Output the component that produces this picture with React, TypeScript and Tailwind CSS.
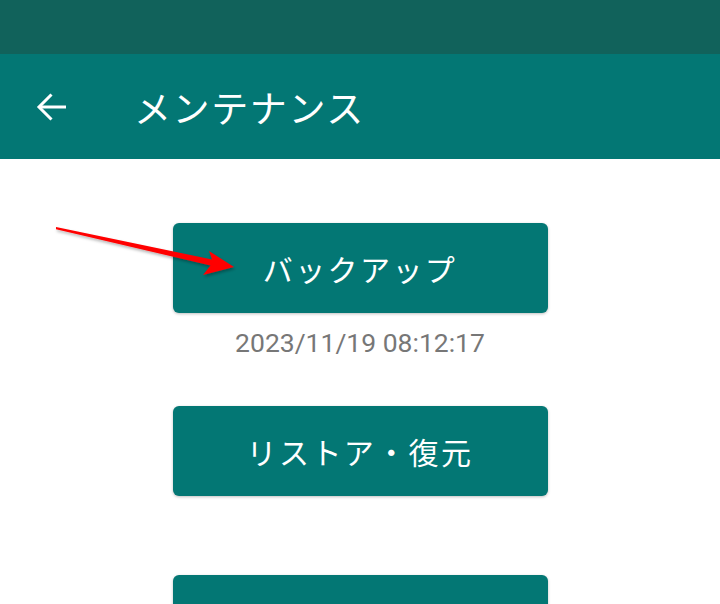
import React from "react";

export default function App() {
  return (
    <div className="relative w-[720px] h-[604px] overflow-hidden bg-white">
      <div className="h-[54px] bg-[#11625b]" />
      <div className="h-[105px] bg-[#037774] flex items-center pl-[36px]">
        <svg width="30" height="30" viewBox="0 0 30 30" className="shrink-0 mt-[1px]">
          <path d="M30 15H3" stroke="white" strokeWidth="3" fill="none" />
          <path d="M15.5 2.5L3 15L15.5 27.5" stroke="white" strokeWidth="3" fill="none" />
        </svg>
        <div
          className="ml-[68px] text-white text-[37px] leading-none tracking-[1.6px] mt-[1px]"
          style={{ fontFamily: '"Noto Sans CJK JP", "Noto Sans", sans-serif' }}
        >
          メンテナンス
        </div>
      </div>
      <div className="flex flex-col items-center pt-[64px]">
        <button
          className="w-[375px] h-[90px] rounded-[6px] bg-[#037774] text-white text-[30px] tracking-[2.4px] shadow-[0_1px_3px_rgba(0,0,0,0.25)] flex items-center justify-center"
          style={{ fontFamily: '"Noto Sans CJK JP", "Noto Sans", sans-serif' }}
        >
          バックアップ
        </button>
        <div
          className="mt-[16px] text-[26.5px] leading-[28px] text-[#777777]"
          style={{ fontFamily: 'Roboto, "Liberation Sans", sans-serif' }}
        >
          2023/11/19 08:12:17
        </div>
        <button
          className="mt-[49px] w-[375px] h-[90px] rounded-[6px] bg-[#037774] text-white text-[30px] tracking-[2.4px] shadow-[0_1px_3px_rgba(0,0,0,0.25)] flex items-center justify-center"
          style={{ fontFamily: '"Noto Sans CJK JP", "Noto Sans", sans-serif' }}
        >
          リストア・復元
        </button>
        <button
          className="mt-[79px] w-[375px] h-[90px] rounded-[6px] bg-[#037774] shadow-[0_1px_3px_rgba(0,0,0,0.25)]"
          aria-label="more"
        />
      </div>
      <svg
        className="absolute left-0 top-0 pointer-events-none"
        width="720"
        height="604"
        viewBox="0 0 720 604"
      >
        <defs>
          <filter id="sh" x="-10%" y="-50%" width="120%" height="200%">
            <feDropShadow dx="1" dy="2" stdDeviation="1.5" floodColor="#000" floodOpacity="0.3" />
          </filter>
        </defs>
        <polygon
          points="56,227 212,259.5 209,251 234,267 203,275 210.5,265.5 56,229.2"
          fill="#ff0000"
          filter="url(#sh)"
        />
      </svg>
    </div>
  );
}
